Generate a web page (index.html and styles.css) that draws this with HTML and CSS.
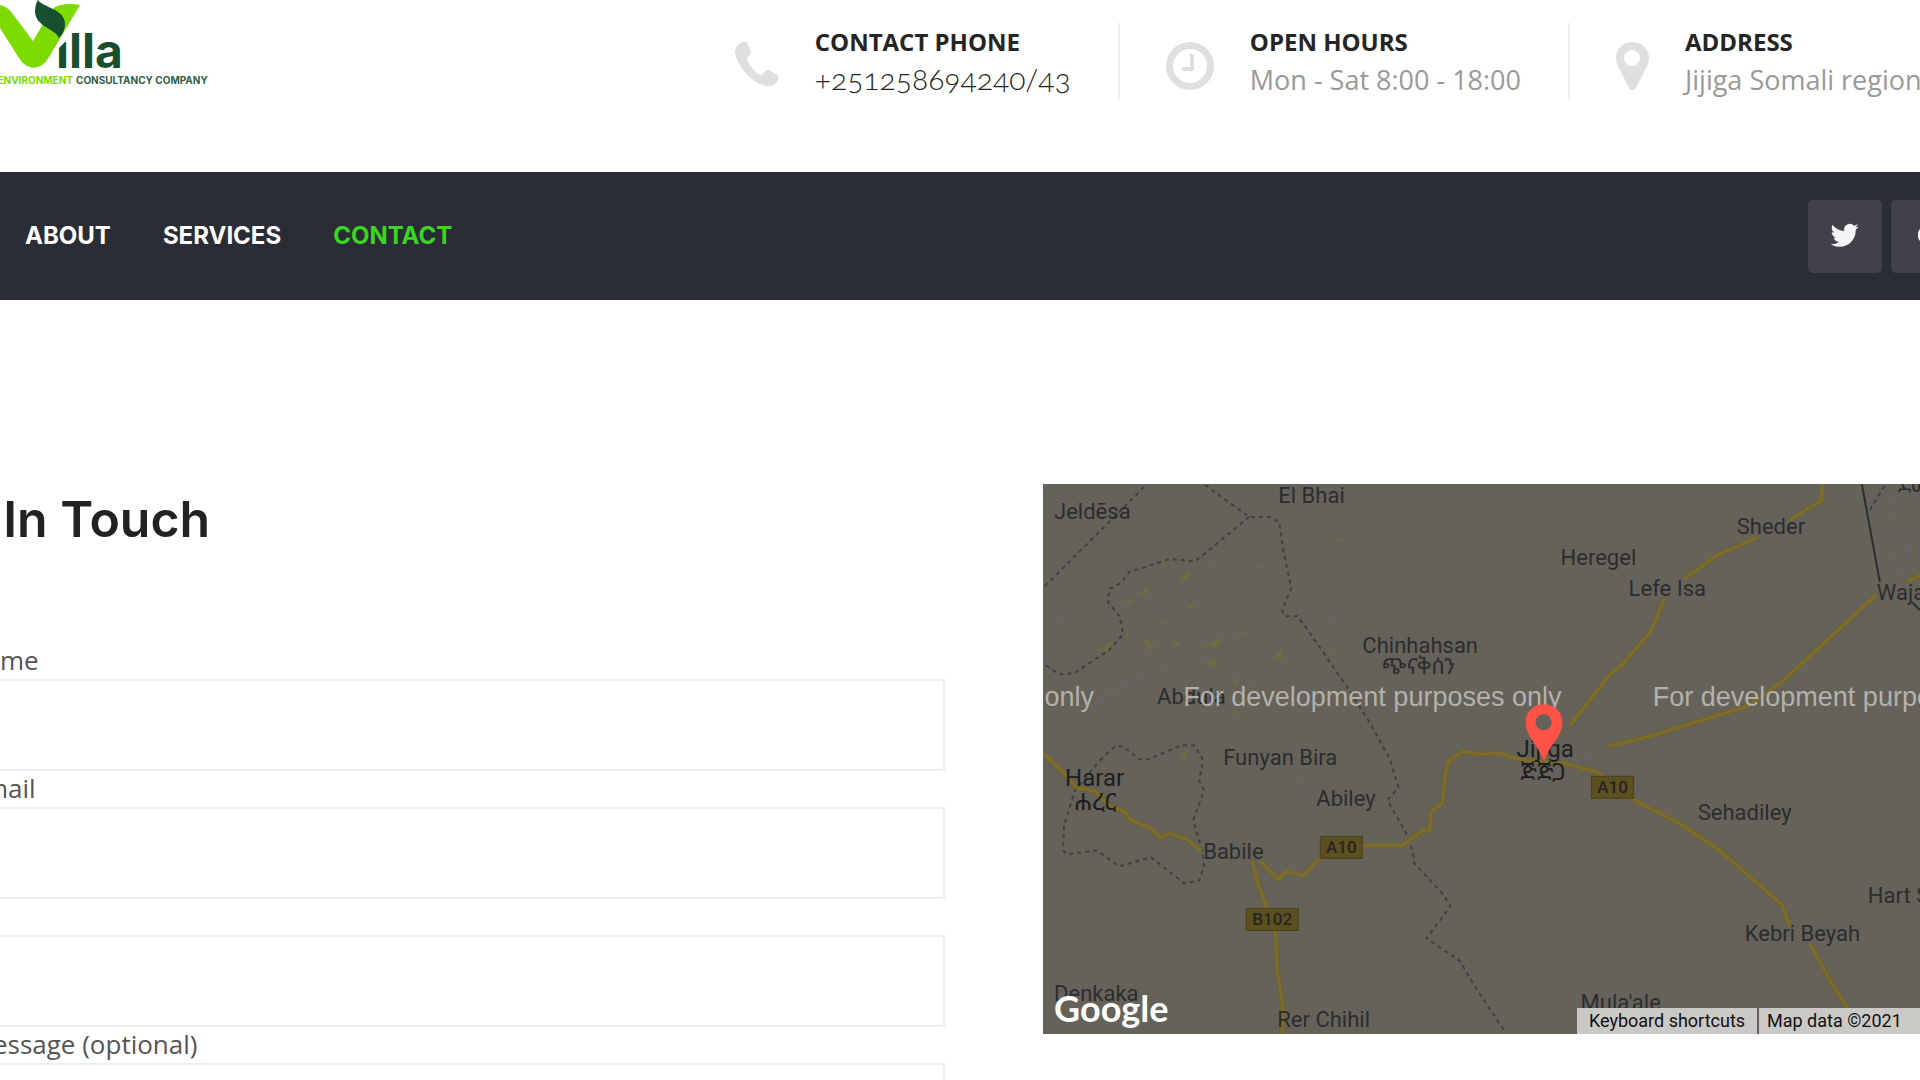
FILE: index.html
```html
<!DOCTYPE html>
<html lang="en">
<head>
<meta charset="utf-8">
<meta name="viewport" content="width=device-width, initial-scale=1">
<title>Villa Environment Consultancy Company - Contact</title>
<link rel="stylesheet" href="styles.css">
</head>
<body>
<header class="header">
  <a class="logo" href="#" aria-label="Villa Environment Consultancy Company">
    <svg width="212" height="90" viewBox="0 0 212 90">
      <text class="logo-word" x="56" y="68">illa</text>
      <path fill="#fff" d="M52 24H69V38L57 50H50Z"/>
      <path fill="#7ddb00" d="M-14 6C-4 3 6 4 12 13L33 41L50 12C55 4 68 3 80 5L49 57C41 71 27 71 19 58Z"/>
      <path fill="#174f30" d="M38 0C44 8 65 9 65 24C65 30 62 35 59 38C56 29 36 27 35 12C35 7 36 3 38 0Z"/>
      <text class="logo-tag logo-tag-green" x="73" y="84" text-anchor="end">ENVIRONMENT</text>
      <text class="logo-tag" x="76" y="84">CONSULTANCY COMPANY</text>
    </svg>
  </a>
  <div class="info">
    <div class="info-item">
      <svg class="info-icon" width="44" height="48" viewBox="0 0 44 48"><path d="M8 0C9 -1 11 -1 12 1L16 9C17 11 16 12 13 15C11 17 13 21 18 27C23 33 26 34 28 32C31 28 32 27 34 28L42 33C44 34 44 36 43 38C41 43 36 45 31 44C16 41 2 23 0 11C0 6 3 1 8 0Z"/></svg>
      <div><h2 class="info-title">CONTACT PHONE</h2><a class="info-text info-phone" href="tel:+251258694240">+251258694240/43</a></div>
    </div>
    <div class="info-item">
      <svg class="info-icon" width="48" height="48" viewBox="0 0 48 48"><path fill-rule="evenodd" d="M24 0A24 24 0 1 1 24 48A24 24 0 1 1 24 0ZM24 7A17 17 0 1 0 24 41A17 17 0 1 0 24 7ZM24 12H28V29H16V25H24Z"/></svg>
      <div><h2 class="info-title">OPEN HOURS</h2><p class="info-text">Mon - Sat 8:00 - 18:00</p></div>
    </div>
    <div class="info-item info-last">
      <svg class="info-icon" width="33" height="48" viewBox="0 0 33 48"><path fill-rule="evenodd" d="M16 0C26 0 33 7 33 16C33 21 31 24 29 28L20 46C18 49 15 49 13 46L4 28C2 24 0 21 0 16C0 7 7 0 16 0ZM16 8A8 8 0 1 0 16 24A8 8 0 1 0 16 8Z"/></svg>
      <div><h2 class="info-title">ADDRESS</h2><p class="info-text">Jijiga Somali region</p></div>
    </div>
  </div>
</header>

<nav class="navbar">
  <div class="menu">
    <a href="#">ABOUT</a>
    <a href="#">SERVICES</a>
    <a class="active" href="#">CONTACT</a>
  </div>
  <div class="social">
    <a href="#" aria-label="Twitter"><svg width="28" height="28" viewBox="0 0 24 24"><path d="M23.6 3.900a10 10 0 0 1-2.8.8 4.900 4.900 0 0 0 2.100-2.700 9.700 9.700 0 0 1-3.100 1.200 4.900 4.900 0 0 0-8.400 4.500A13.900 13.900 0 0 1 1.300 2.600a4.900 4.900 0 0 0 1.500 6.500 4.900 4.900 0 0 1-2.200-.6c0 2.400 1.700 4.400 3.900 4.900a4.900 4.900 0 0 1-2.200.1 4.900 4.900 0 0 0 4.600 3.400A9.900 9.900 0 0 1-.3 19a13.900 13.900 0 0 0 7.500 2.200c9.100 0 14-7.500 14-14v-.6a10 10 0 0 0 2.400-2.700z"/></svg></a>
    <a href="#" aria-label="Google"><svg width="20" height="28" viewBox="0 0 20 28"><path d="M10 11v4h5c-1 3-3 4-5 4a6 6 0 1 1 4-10l3-3a10 10 0 1 0-7 17c6 0 10-4 10-10v-2z"/></svg></a>
  </div>
</nav>

<main class="contact">
  <section class="form-side">
    <h1 class="heading">Get In Touch</h1>
    <form class="form">
      <label for="name">Your name</label>
      <input id="name" type="text">
      <label for="email">Your Email</label>
      <input id="email" type="email">
      <label for="subject">Subject</label>
      <input id="subject" type="text">
      <label for="message">Your Message (optional)</label>
      <textarea id="message"></textarea>
    </form>
  </section>
  <section class="map" aria-label="Map">
    <svg class="map-art" viewBox="1044 484 876 550" preserveAspectRatio="xMinYMin slice">
      <g class="river">
        <path d="M1044 616h12l10 10 3-5h22l3 4 13-4M1085 760v-35l12-25 50-26 6-4 30-1 10-5 25 3 8 12M1220 655l10-11 18-11h45l15-4 23-4 1-7 20 0 12 8 10 8M1290 770l14 11 12 40 6 15M1497 715l30 36M1575 762l30-15M1850 490l20 25 25-30M1893 494l-4 60 20 30M1895 500l15 14-2 50"/>
      </g>
      <g class="patch">
        <path d="M1161 564l12-10-10 14zM1182 577l7-6 3 5-7 5zM1207 569l10-5-6 5zM1255 566l10-1-6 3zM1140 596l8-12 2 8zM1127 598l10 4-9 3zM1187 603l12 5-9 1zM1160 622l16-4-14 6zM1095 652l22-14-8 12zM1144 638l12 7-8 5zM1172 640l10 3-6 3zM1203 646l22-9-7 10zM1238 634l11-3-6 5zM1274 656l8-7 1 11zM1325 655l13-8-6 6zM1233 684l10-10-6 11zM1250 690l6-13-1 8zM1204 663l14-5-1 9zM1232 714l9-9-6 9zM1180 758l11-13-6 14zM1288 536l14-1-4 2zM1333 541l12-3-6 4zM1127 630l4 10-3-1z"/>
      </g>
      <g class="border">
        <path d="M1046 586L1148 484M1206 485L1250 517H1270L1280 522L1284 550L1292 588L1283 610L1285 616H1298L1310 632L1350 690L1372 725L1391 760L1399 787L1388 800L1411 840L1415 863L1443 893L1451 906L1427 938L1460 960L1478 990L1506 1032"/>
        <path d="M1250 517L1200 558L1195 561L1170 559L1130 572L1122 583L1110 589L1109 602L1121 617L1124 634L1110 650L1075 673L1060 674L1045 664"/>
        <path d="M1101 760L1116 746H1124L1140 759H1150L1182 745H1195L1204 760L1200 780L1205 790L1194 820L1203 850L1205 865L1200 880L1185 883L1170 871L1152 857L1120 866L1098 850L1068 854L1064 850L1065 825L1076 790L1101 760M1870 510L1885 485"/>
      </g>
      <path class="frontier" d="M1862 484L1880 582M1912 602L1920 610"/>
      <g id="roads">
        <path id="road-set" class="road-edge" d="M1044 753L1066 774L1077 787L1096 791L1110 805L1125 811L1132 820L1150 827L1161 837L1171 833L1188 839L1202 850M1261 861L1279 879L1287 871L1305 875L1315 863L1340 845H1403L1425 829L1430 831L1432 811L1443 803L1446 773L1450 760L1464 751L1480 754L1500 753L1520 759L1565 763L1598 772L1635 800L1680 823L1720 850L1782 904L1790 926M1810 943L1832 983L1865 1034M1253 860L1259 884L1276 930L1278 970L1283 1000V1034M1570 726L1609 676L1622 665L1652 630L1664 600M1684 579L1718 555L1758 537M1790 520L1822 500V484M1609 746L1650 736L1748 706L1783 681L1876 595M1907 582L1920 575"/>
        <use href="#road-set" class="road"/>
      </g>
      <g class="badge">
        <rect x="1321" y="836" width="42" height="22"/><text x="1342" y="853">A10</text>
        <rect x="1247" y="908" width="52" height="22"/><text x="1273" y="925">B102</text>
        <rect x="1592" y="776" width="42" height="22"/><text x="1613" y="793">A10</text>
      </g>
      <g class="place">
        <text x="1055" y="519">Jeldēsa</text>
        <text x="1279" y="503">El Bhai</text>
        <text x="1737" y="534">Sheder</text>
        <text x="1561" y="565">Heregel</text>
        <text x="1629" y="596">Lefe Isa</text>
        <text x="1877" y="600">Wajaale</text>
        <text x="1363" y="653">Chinhahsan</text>
        <text x="1382" y="674">ጭናቅሰን</text>
        <text x="1158" y="704">Abdula</text>
        <text x="1224" y="765">Funyan Bira</text>
        <text x="1317" y="806">Abiley</text>
        <text x="1204" y="859">Babile</text>
        <text x="1278" y="1026">Rer Chihil</text>
        <text x="1055" y="1000">Denkaka</text>
        <text x="1698" y="820">Sehadiley</text>
        <text x="1868" y="903">Hart Sheik</text>
        <text x="1745" y="941">Kebri Beyah</text>
        <text x="1581" y="1009">Mula'ale</text>
        <text x="1898" y="492">ደወ</text>
        <g class="city">
          <text x="1066" y="786">Harar</text>
          <text x="1075" y="810">ሐረር</text>
          <text x="1517" y="757">Jijiga</text>
          <text x="1521" y="780">ጅጅጋ</text>
        </g>
      </g>
      <g class="notice">
        <text x="717" y="706">For development purposes only</text>
        <text x="1184" y="706">For development purposes only</text>
        <text x="1653" y="706">For development purposes only</text>
      </g>
      <path fill="#ff5246" fill-rule="evenodd" d="M1544 704C1555 704 1563 712 1563 722C1563 735 1551 744 1546 758Q1544 761 1543 758C1538 744 1526 735 1526 722C1526 712 1534 704 1544 704ZM1544 714A8 8 0 1 0 1544 730A8 8 0 1 0 1544 714Z"/>
      <text class="google" x="1055" y="1021">Google</text>
    </svg>
    <div class="map-bar">
      <button type="button">Keyboard shortcuts</button>
      <span>Map data ©2021</span>
    </div>
  </section>
</main>
</body>
</html>
```
FILE: styles.css
```css
* { box-sizing: border-box; }
html { scrollbar-width: none; }
body {
  margin: 0;
  overflow-x: hidden;
  background: #fff;
  color: #555;
  font-family: "Open Sans", "Noto Sans", sans-serif;
}
h1, h2, p { margin: 0; }
a { text-decoration: none; }

/* Header */
.header {
  display: flex;
  justify-content: space-between;
  align-items: flex-start;
  min-height: 172px;
}
.logo svg { display: block; }
.logo-word { font: 700 48px Inter, sans-serif; fill: #174f30; }
.logo-tag { font: 700 10px Inter, sans-serif; fill: #2f6046; }
.logo-tag-green { fill: #7ddb00; }
.info { display: flex; padding-top: 23px; }
.info-item {
  display: flex;
  gap: 36px;
  min-height: 77px;
  padding: 0 47px 0 46px;
  border-right: 2px solid #eee;
  white-space: nowrap;
}
.info-last {
  width: 350px;
  padding-right: 0;
  border-right: 0;
  overflow: hidden;
}
.info-icon { flex: none; margin-top: 19px; fill: #dfdfdf; }
.info-title {
  color: #252525;
  font-size: 24px;
  font-weight: 700;
  line-height: 38px;
}
.info-text {
  display: block;
  color: #999;
  font-size: 27px;
  line-height: 38px;
}
.info-phone {
  color: #222;
  font-family: Lato, sans-serif;
  font-size: 30px;
  font-weight: 300;
  line-height: 34px;
  font-feature-settings: "onum";
}

/* Navigation */
.navbar {
  display: flex;
  justify-content: space-between;
  align-items: center;
  height: 128px;
  background: #2a2d35;
  overflow: hidden;
}
.menu { display: flex; gap: 52px; padding-left: 25px; }
.menu a {
  color: #fff;
  font: 700 24px/36px Inter, sans-serif;
}
.menu .active { color: #3bd623; }
.social { display: flex; gap: 9px; margin-right: -45px; }
.social a {
  display: flex;
  justify-content: center;
  align-items: center;
  width: 74px;
  height: 73px;
  border-radius: 5px;
  background: #414249;
}
.social svg { fill: #f5f5f5; }

/* Contact section */
.contact {
  display: grid;
  grid-template-columns: minmax(0, 1038fr) minmax(0, 876fr);
  align-items: start;
  gap: 98px;
  margin-left: -94px;
  padding: 184px 0 60px;
}
.heading {
  margin-bottom: 89px;
  color: #222;
  font: 600 50px/70px Inter, sans-serif;
}
.form { display: flex; flex-direction: column; }
.form label {
  padding-bottom: 2px;
  font-size: 26px;
  line-height: 34px;
}
.form input,
.form textarea {
  width: 100%;
  height: 92px;
  padding: 0 24px;
  border: 2px solid #eee;
  border-radius: 0;
  background: #fff;
  color: #555;
  font: inherit;
  font-size: 26px;
  outline: 0;
}
.form textarea { height: 240px; padding: 24px; resize: vertical; }

/* Map */
.map { position: relative; height: 550px; overflow: hidden; background: #65625a; }
.map-art { display: block; width: 100%; height: 100%; }
.river { fill: none; stroke: #62676a; stroke-width: 1; }
.patch { fill: #6f6b45; }
.border { fill: none; stroke: #3f4146; stroke-width: 2; stroke-dasharray: 4 4; }
.frontier { fill: none; stroke: #2b2d2e; stroke-width: 2; }
.road-edge { fill: none; stroke-linejoin: round; }
#roads { stroke: #70632f; stroke-width: 5; }
#roads .road { stroke: #7c6d2d; stroke-width: 3; }
.badge rect { fill: #5c5021; stroke: #4a411c; stroke-width: 1; }
.badge text { fill: #25251f; font: 500 17px Roboto, sans-serif; text-anchor: middle; }
.place { fill: #2c2d2f; font: 400 22px Roboto, "Noto Sans Ethiopic", sans-serif; }
.city { fill: #1d1e20; font-size: 24px; }
.notice { fill: #b3b1ad; font: 400 27px "Liberation Sans", sans-serif; }
.google { fill: #fff; font: 700 36px Lato, sans-serif; }
.map-bar {
  position: absolute;
  right: 0;
  bottom: 0;
  display: flex;
  width: 343px;
  color: #111;
  font: 400 18px/26px Roboto, sans-serif;
  white-space: nowrap;
}
.map-bar button,
.map-bar span {
  padding: 0 10px;
  border: 0;
  background: #cac9c6;
  color: inherit;
  font: inherit;
}
.map-bar button { width: 180px; margin-right: 2px; padding: 0; }
.map-bar span { flex: 1; padding-left: 8px; }
```
